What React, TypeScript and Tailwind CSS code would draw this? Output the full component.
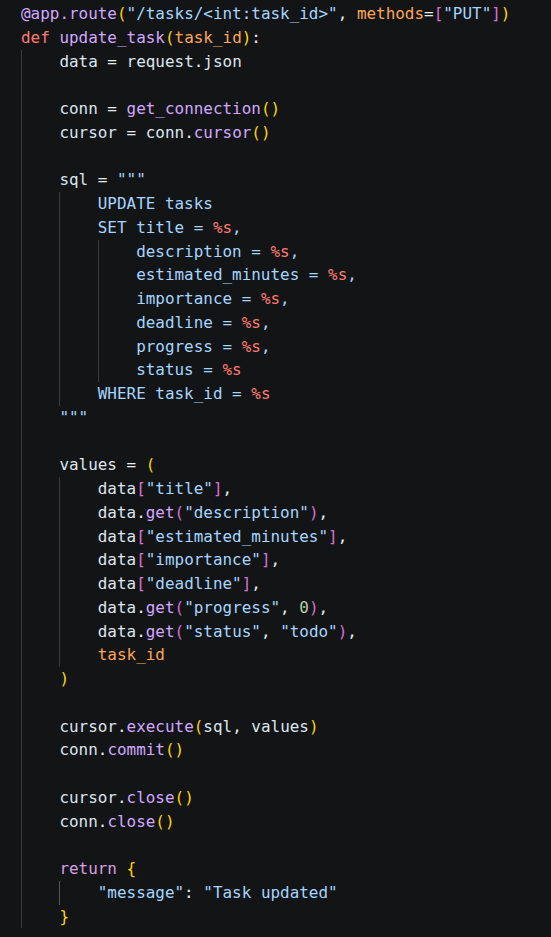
type Tok = [string, string];

const C: Record<string, string> = {
  v: "text-[#dde5ee]",
  p: "text-[#e6edf3]",
  f: "text-[#d2a8ff]",
  k: "text-[#ff7b72]",
  r: "text-[#d9a0e0]",
  a: "text-[#ffa657]",
  s: "text-[#a5d6ff]",
  fmt: "text-[#ff7b72]",
  n: "text-[#b5cea8]",
  b1: "text-[#ffd700]",
  b2: "text-[#da70d6]",
  b3: "text-[#179fff]",
};

type Line = { guides: number; toks: Tok[] };

const L = (guides: number, ...toks: Tok[]): Line => ({ guides, toks });

const lines: Line[] = [
  L(0, ["@app.route", "f"], ["(", "b1"], ['"/tasks/<int:task_id>"', "s"], [", ", "p"], ["methods", "a"], ["=", "p"], ["[", "b2"], ['"PUT"', "s"], ["]", "b2"], [")", "b1"]),
  L(0, ["def ", "k"], ["update_task", "f"], ["(", "b1"], ["task_id", "a"], [")", "b1"], [":", "p"]),
  L(1, ["data", "v"], [" = ", "p"], ["request", "v"], [".", "p"], ["json", "v"]),
  L(1),
  L(1, ["conn", "v"], [" = ", "p"], ["get_connection", "f"], ["()", "b1"]),
  L(1, ["cursor", "v"], [" = ", "p"], ["conn", "v"], [".", "p"], ["cursor", "f"], ["()", "b1"]),
  L(1),
  L(1, ["sql", "v"], [" = ", "p"], ['"""', "s"]),
  L(2, ["UPDATE tasks", "s"]),
  L(2, ["SET title = ", "s"], ["%s", "fmt"], [",", "s"]),
  L(3, ["description = ", "s"], ["%s", "fmt"], [",", "s"]),
  L(3, ["estimated_minutes = ", "s"], ["%s", "fmt"], [",", "s"]),
  L(3, ["importance = ", "s"], ["%s", "fmt"], [",", "s"]),
  L(3, ["deadline = ", "s"], ["%s", "fmt"], [",", "s"]),
  L(3, ["progress = ", "s"], ["%s", "fmt"], [",", "s"]),
  L(3, ["status = ", "s"], ["%s", "fmt"]),
  L(2, ["WHERE task_id = ", "s"], ["%s", "fmt"]),
  L(1, ['"""', "s"]),
  L(1),
  L(1, ["values", "v"], [" = ", "p"], ["(", "b1"]),
  L(2, ["data", "v"], ["[", "b2"], ['"title"', "s"], ["]", "b2"], [",", "p"]),
  L(2, ["data", "v"], [".", "p"], ["get", "f"], ["(", "b2"], ['"description"', "s"], [")", "b2"], [",", "p"]),
  L(2, ["data", "v"], ["[", "b2"], ['"estimated_minutes"', "s"], ["]", "b2"], [",", "p"]),
  L(2, ["data", "v"], ["[", "b2"], ['"importance"', "s"], ["]", "b2"], [",", "p"]),
  L(2, ["data", "v"], ["[", "b2"], ['"deadline"', "s"], ["]", "b2"], [",", "p"]),
  L(2, ["data", "v"], [".", "p"], ["get", "f"], ["(", "b2"], ['"progress"', "s"], [", ", "p"], ["0", "n"], [")", "b2"], [",", "p"]),
  L(2, ["data", "v"], [".", "p"], ["get", "f"], ["(", "b2"], ['"status"', "s"], [", ", "p"], ['"todo"', "s"], [")", "b2"], [",", "p"]),
  L(2, ["task_id", "a"]),
  L(1, [")", "b1"]),
  L(1),
  L(1, ["cursor", "v"], [".", "p"], ["execute", "f"], ["(", "b1"], ["sql", "v"], [", ", "p"], ["values", "v"], [")", "b1"]),
  L(1, ["conn", "v"], [".", "p"], ["commit", "f"], ["()", "b1"]),
  L(1),
  L(1, ["cursor", "v"], [".", "p"], ["close", "f"], ["()", "b1"]),
  L(1, ["conn", "v"], [".", "p"], ["close", "f"], ["()", "b1"]),
  L(1),
  L(1, ["return ", "r"], ["{", "b1"]),
  L(2, ['"message"', "s"], [": ", "p"], ['"Task updated"', "s"]),
  L(1, ["}", "b1"]),
];

function CodeLine({ line }: { line: Line }) {
  return (
    <div className="flex h-[23.75px] items-stretch leading-[23.75px]">
      {Array.from({ length: line.guides }).map((_, i) => (
        <span
          key={i}
          className={
            i === 1 && line.toks[0]?.[0] === '"message"'
              ? "w-[4ch] shrink-0 border-l border-[#555555]"
              : "w-[4ch] shrink-0 border-l border-[#3c3c3c]"
          }
        />
      ))}
      <span className="whitespace-pre">
        {line.toks.map(([t, c], i) => (
          <span key={i} className={C[c]}>
            {t}
          </span>
        ))}
      </span>
    </div>
  );
}

export default function App() {
  return (
    <div className="min-h-screen bg-[#131416] pl-[21px] pt-[2px] font-[DejaVu_Sans_Mono,monospace] text-[15.95px]">
      {lines.map((line, i) => (
        <CodeLine key={i} line={line} />
      ))}
    </div>
  );
}
